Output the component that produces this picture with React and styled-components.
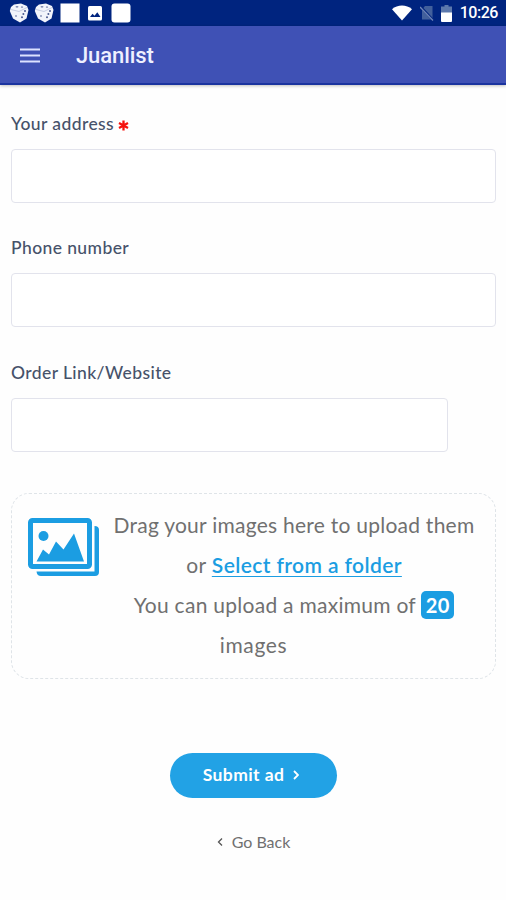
import React from "react";
import styled, { createGlobalStyle } from "styled-components";

const GlobalStyle = createGlobalStyle`
  * {
    box-sizing: border-box;
  }

  body {
    margin: 0;
    background-color: #fefefe;
    font-family: "Lato", "Open Sans", sans-serif;
  }
`;

const Page = styled.div`
  width: 100%;
  height: 900px;
  overflow: hidden;
`;

const StatusBar = styled.div`
  height: 26px;
  padding: 0 8px 0 9px;
  display: flex;
  align-items: center;
  justify-content: space-between;
  background-color: #00247f;
`;

const StatusGroup = styled.div`
  display: flex;
  align-items: center;
  gap: ${(props) => props.$gap}px;
`;

const Clock = styled.span`
  color: white;
  font-family: "Roboto", sans-serif;
  font-size: 16px;
  font-weight: 500;
  line-height: 28px;
  letter-spacing: -0.45px;
`;

const Header = styled.header`
  height: 59px;
  padding: 2px 0 0 20px;
  display: flex;
  align-items: center;
  gap: 36px;
  background-color: #3f51b5;
  border-bottom: 2px solid #1b349f;
  box-shadow: 0 1px 3px rgba(0, 0, 0, 0.25);
`;

const AppTitle = styled.h1`
  margin: 0;
  color: #eef0ff;
  font-family: "Roboto", sans-serif;
  font-size: 22px;
  font-weight: 500;
  letter-spacing: -0.1px;
`;

const Form = styled.form`
  padding: 27px 10px 0 11px;
`;

const Field = styled.div`
  margin-bottom: 33.4px;
`;

const Label = styled.label`
  display: block;
  height: 37px;
  color: #46526a;
  font-size: 17.5px;
  font-weight: 500;
  line-height: 24px;
  letter-spacing: 0.4px;
`;

const Required = styled.svg`
  margin-left: 4px;
  vertical-align: -1px;
`;

const Input = styled.input`
  display: block;
  width: ${(props) => props.$width || "100%"};
  height: 54px;
  border: 1.5px solid #e2e3ec;
  border-radius: 4px;
  background-color: white;
`;

const DropZone = styled.div`
  height: 186px;
  margin-top: 41px;
  padding: 11px 15px;
  border: 1.5px dashed #dfe4e8;
  border-radius: 18px;
  color: #707070;
  font-size: 21px;
  line-height: 40px;
  text-align: center;
  white-space: nowrap;
`;

const IconHolder = styled.span`
  float: left;
  width: 81px;
  height: 100px;
  padding: 13px 0 0 1px;
  line-height: 0;
  text-align: left;
`;

const Line = styled.div`
  letter-spacing: ${(props) => props.$spacing}px;
`;

const FolderLink = styled.a`
  color: #1b9de2;
  font-weight: 600;
  text-decoration: underline;
  text-decoration-thickness: 1px;
  text-underline-offset: 3px;
`;

const Badge = styled.span`
  display: inline-block;
  width: 33px;
  height: 28px;
  border-radius: 5px;
  background-color: #1b9de2;
  color: white;
  font-size: 20px;
  font-weight: 700;
  line-height: 29px;
  letter-spacing: 0.5px;
`;

const Actions = styled.div`
  margin-top: 74px;
  display: flex;
  flex-direction: column;
  align-items: center;
`;

const SubmitButton = styled.button`
  width: 167px;
  height: 45px;
  padding: 0 5px 1px 0;
  display: flex;
  align-items: center;
  justify-content: center;
  gap: 9px;
  border: none;
  border-radius: 23px;
  background-color: #22a2e5;
  color: white;
  font-family: inherit;
  font-size: 17.5px;
  font-weight: 700;
  letter-spacing: 0.4px;
`;

const BackLink = styled.a`
  margin-top: 32px;
  display: flex;
  align-items: center;
  gap: 9px;
  color: #707070;
  font-size: 16px;
  line-height: 24px;
`;

const DiceIcon = () => (
  <svg width="20" height="20" viewBox="0 0 20 20">
    <path
      d="M5 1.5 12 .5l6 2.500 1.500 4-2 8.500-6.500 4L4 15.500.8 8 2 4z"
      fill="#f2f4fb"
    />
    <path d="m2 6.500 8 2 8-4" fill="none" stroke="#c6cde2" />
    <g fill="#4a5a90">
      <ellipse cx="8" cy="3.800" rx="1.500" ry="0.6" />
      <ellipse cx="13" cy="4" rx="1.200" ry="0.6" />
      <circle cx="7" cy="13" r="0.8" />
      <circle cx="16" cy="8" r="1" />
      <circle cx="14.400" cy="11" r="1" />
      <circle cx="13" cy="14.300" r="1" />
    </g>
  </svg>
);

const SquareIcon = ({ radius }) => (
  <svg width="20" height="20" viewBox="0 0 20 20">
    <rect x="0.500" y="0.500" width="19" height="19" rx={radius} fill="white" />
  </svg>
);

const PhotoIcon = () => (
  <svg width="20" height="20" viewBox="0 0 20 20">
    <rect x="3" y="3" width="14" height="14.500" rx="1.500" fill="white" />
    <path d="m5 14 2.500-3.300 2 2 2.800-3.500L15.500 14z" fill="#00247f" />
  </svg>
);

const WifiIcon = () => (
  <svg width="20" height="16" viewBox="0 0 20 16">
    <path d="M0 4.200C5.500-.7 14.500-.7 20 4.200L10 15.500z" fill="white" />
  </svg>
);

const NoSimIcon = () => (
  <svg width="14" height="16" viewBox="0 0 14 16">
    <path d="M5 1h7.500v13.500H2V4.500z" fill="#42609c" />
    <path d="m0 1 13 14" stroke="#00247f" strokeWidth="2.500" />
    <path d="m0 2 13 13.500" stroke="#6f86b7" strokeWidth="1.300" />
  </svg>
);

const BatteryIcon = () => (
  <svg width="11" height="17" viewBox="0 0 11 17">
    <path d="M3.500 0h4v1.500H11V8H0V1.500h3.500z" fill="#5c78ac" />
    <path d="M0 7.500h11V16a1 1 0 0 1-1 1H1a1 1 0 0 1-1-1z" fill="white" />
  </svg>
);

const MenuIcon = () => (
  <svg width="20" height="15" viewBox="0 0 20 15">
    <path d="M0 1.500h20M0 7.500h20M0 13.500h20" stroke="#dce2ff" strokeWidth="2" />
  </svg>
);

const AsteriskIcon = () => (
  <Required width="11" height="11" viewBox="0 0 11 11">
    <path
      d="M5.500.5v10M1 3l9 5M10 3 1 8"
      stroke="#f5130e"
      strokeWidth="2.300"
    />
  </Required>
);

const ImagesIcon = () => (
  <svg width="72" height="59" viewBox="0 0 72 59">
    <rect
      x="2.500"
      y="2.500"
      width="59"
      height="46"
      rx="2"
      fill="none"
      stroke="#1b9de2"
      strokeWidth="5"
    />
    <path
      d="M66.500 8q4.500 0 4.500 4v42q0 4-4 4H13q-4 0-4.500-4.500h58z"
      fill="#1b9de2"
    />
    <circle cx="15.500" cy="18" r="5" fill="#1b9de2" />
    <path d="m8.500 43.500 6.500-12 6 5L28 23.500l7.500 8L46 15.500l10 28z" fill="#1b9de2" />
  </svg>
);

const Chevron = ({ d, color, width }) => (
  <svg width="6" height="10" viewBox="0 0 6 10">
    <path d={d} fill="none" stroke={color} strokeWidth={width} />
  </svg>
);

const App = () => {
  return (
    <Page>
      <GlobalStyle />
      <StatusBar>
        <StatusGroup $gap={5.4}>
          <DiceIcon />
          <DiceIcon />
          <SquareIcon radius={0} />
          <PhotoIcon />
          <SquareIcon radius={3} />
        </StatusGroup>
        <StatusGroup $gap={7.5}>
          <WifiIcon />
          <NoSimIcon />
          <BatteryIcon />
          <Clock>10:26</Clock>
        </StatusGroup>
      </StatusBar>
      <Header>
        <MenuIcon />
        <AppTitle>Juanlist</AppTitle>
      </Header>
      <Form>
        <Field>
          <Label>
            Your address
            <AsteriskIcon />
          </Label>
          <Input />
        </Field>
        <Field>
          <Label>Phone number</Label>
          <Input />
        </Field>
        <Field>
          <Label>Order Link/Website</Label>
          <Input $width="437px" />
        </Field>
        <DropZone>
          <IconHolder>
            <ImagesIcon />
          </IconHolder>
          <Line $spacing={0.25}>Drag your images here to upload them</Line>
          <Line $spacing={0.4}>
            or <FolderLink>Select from a folder</FolderLink>
          </Line>
          <Line $spacing={0.27}>
            You can upload a maximum of <Badge>20</Badge>
          </Line>
          <Line $spacing={0.6}>images</Line>
        </DropZone>
        <Actions>
          <SubmitButton type="button">
            Submit ad
            <Chevron d="m1 1 4 4-4 4" color="white" width="1.800" />
          </SubmitButton>
          <BackLink>
            <Chevron d="M5 1.500 1.500 5 5 8.500" color="#555" width="1.300" />
            Go Back
          </BackLink>
        </Actions>
      </Form>
    </Page>
  );
};

export default App;
